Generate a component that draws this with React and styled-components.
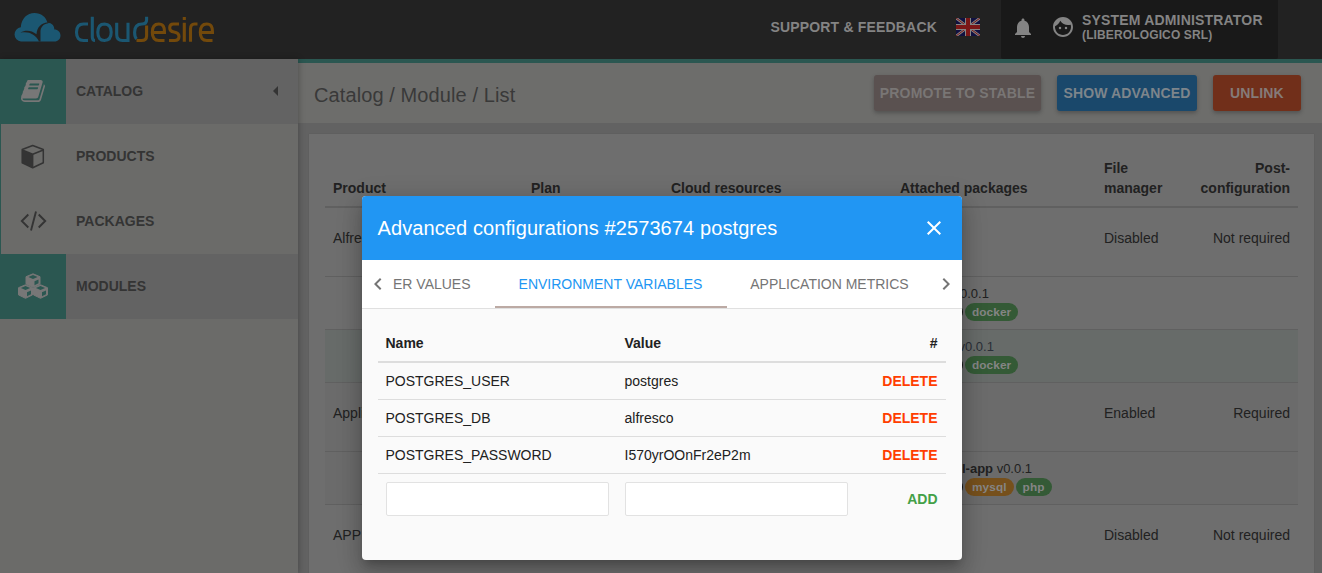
import React from "react";
import styled, { createGlobalStyle, css } from "styled-components";
import { MdNotifications, MdFace, MdChevronLeft, MdChevronRight, MdClose, MdArrowLeft } from "react-icons/md";

const Global = createGlobalStyle`
  * { box-sizing: border-box; }
  body { margin: 0; overflow: hidden; background: #626262; color: #212121;
    font-family: "Liberation Sans", Arial, sans-serif; font-size: 14px; line-height: 20px; }
`;
const Page = styled.div`height: 573px; display: flex; flex-direction: column; overflow: hidden;`;
const Header = styled.header`
  height: 59px; flex: none; display: flex; background: #222222; color: #848484; font-weight: bold;
`;
const Brand = styled.div`
  display: flex; padding: 12px 0 0 13px; flex: 1; gap: 12px;
`;
const Support = styled.div`font-size: 14px; padding: 17px 19px 0 0; letter-spacing: .18px;`;
const Flag = styled.svg`display: block; width: 24px; height: 18px; margin: 18px 21px 0 0;`;
const UserZone = styled.div`
  width: 277px; margin-right: 44px; background: #191919; border-radius: 0 0 2px 2px; display: flex; padding: 0 0 0 10px;
`;
const Bell = styled(MdNotifications)`width: 24px; height: 24px; margin-top: 16px; flex: none;`;
const Face = styled(MdFace)`width: 24px; height: 24px; margin: 15px 7px 0 16px; flex: none;`;
const UserText = styled.div`padding-top: 12px; line-height: 16px; letter-spacing: .18px; white-space: nowrap;`;
const Company = styled.div`font-size: 12px; line-height: 14px; letter-spacing: .13px;`;

const Body = styled.div`flex: 1; display: flex; min-height: 0;`;
const Sidebar = styled.nav`
  width: 298px; flex: none; background: #6b6b69; box-shadow: 1px 0 6px rgba(0,0,0,.25); z-index: 1; position: relative;
`;
const NavItem = styled.div`
  height: 65px; display: flex; align-items: center; color: #343434; font-weight: bold; letter-spacing: 0;
  padding-right: 11px;
  ${p => p.$active ? css`background: #636363;` : css`border-left: 1px solid #2b5751;`}
`;
const NavIcon = styled.div`
  width: ${p => p.$active ? 66 : 65}px; height: 65px; margin-right: 10px; display: grid; place-items: center;
  background: ${p => p.$active ? "#2b5751" : "transparent"}; color: ${p => p.$active ? "#777" : "#343434"};
  padding: 0 ${p => p.$active ? 0 : 2}px 1px 0;
  svg { display: block; }
`;
const NavLabel = styled.span`flex: 1; padding-bottom: 2px;`;
const Caret = styled(MdArrowLeft)`width: 24px; height: 24px; margin: 0 -1px 2px 0;`;

const Main = styled.main`flex: 1; min-width: 0; border-top: 4px solid #2b5751;`;
const TitleBar = styled.div`
  height: 60px; background: #6d6d6b; display: flex; gap: 16px; padding: 12px 21px 0 16px;
`;
const Crumb = styled.h1`margin: 0; flex: 1; font-size: 20px; line-height: 40px; font-weight: normal; color: #393939; letter-spacing: .1px;`;
const Button = styled.button`
  height: 36px; width: ${p => p.$w}px; border: 0; border-radius: 3px; background: ${p => p.$bg}; color: ${p => p.$fg};
  font: bold 14px "Liberation Sans", sans-serif; letter-spacing: .15px; padding: 0; white-space: nowrap;
  box-shadow: 0 2px 4px rgba(0,0,0,.26);
`;
const Card = styled.section`
  margin: 11px 8px 0 11px; height: 460px; background: #6e6e6e; padding: 16px 16px 0; overflow: hidden; box-shadow: 0 0 1px rgba(0,0,0,.15);
`;
const Table = styled.div`display: flex; flex-direction: column;`;
const Row = styled.div`
  display: grid; grid-template-columns: 198px 140px 229px 204px 78px 1fr; padding: 0 8px; height: ${p => p.$h}px;
  border-bottom: 1px solid #606060; color: #212121; align-items: ${p => p.$top ? "start" : "center"};
  background: ${p => p.$bg || "transparent"};
  & > :last-child { text-align: right; }
`;
const HeadRow = styled(Row)`
  height: 58px; border-bottom: 2px solid #606060; font-weight: bold; align-items: end; padding-bottom: 8px;
`;
const RowCell = styled.div`padding-bottom: ${p => p.$lift || 0}px; white-space: ${p => p.$wrap ? "normal" : "nowrap"};`;
const Package = styled.div`padding-top: 9px; width: 204px; font-size: 13px; line-height: 16px; white-space: nowrap; color: ${p => p.$blue ? "#2a2f37" : "#212121"};`;
const PackageLine = styled.div`padding-left: ${p => p.$x}px;`;
const Tags = styled.div`display: flex; gap: 2px; padding: 1px 0 0;`;
const Tag = styled.span`
  height: 18px; border-radius: 9px; padding: 0 7px; font: bold 11.8px/18px "Liberation Sans", sans-serif;
  letter-spacing: .1px; color: #858585; background: ${p => p.$bg};
`;
const KindTag = styled(Tag)`width: 63px;`;

const Dialog = styled.div`
  position: absolute; z-index: 5; left: 362px; top: 196px; width: 600px; height: 364px; background: #fafafa;
  border-radius: 4px; overflow: hidden;
  box-shadow: 0 7px 8px -4px rgba(0,0,0,.2), 0 13px 19px 2px rgba(0,0,0,.14), 0 5px 24px 4px rgba(0,0,0,.12);
`;
const DialogHead = styled.div`
  height: 64px; background: #2196f3; color: #fff; display: flex; align-items: center; justify-content: space-between;
  padding: 0 16.5px 0 15.5px; font-size: 20px; letter-spacing: .1px;
`;
const Close = styled(MdClose)`width: 24px; height: 24px;`;
const Tabs = styled.div`
  height: 49px; display: flex; background: #fff; border-bottom: 1px solid #e0e0e0; color: #757575;
`;
const TabArrow = styled.div`
  width: ${p => p.$w}px; display: flex; align-items: center; justify-content: center; padding-right: ${p => p.$pull || 0}px;
  svg { width: 24px; height: 24px; flex: none; }
`;
const Tab = styled.div`
  width: ${p => p.$w}px; text-align: ${p => p.$left ? "left" : "center"}; line-height: 48px; height: 48px; white-space: nowrap;
  ${p => p.$on && css`color: #2196f3; border-bottom: 2px solid #bcaaa4; padding-right: 1px;`}
`;
const Vars = styled.div`margin: 16px 16px 0;`;
const VarRow = styled.div`
  height: ${p => p.$h || 37}px; display: grid; grid-template-columns: 239px 1fr 60px; align-items: center; padding: 0 8.5px 0 7.5px;
  border-bottom: ${p => p.$line ?? 1}px solid #ddd; font-weight: ${p => p.$bold ? "bold" : "normal"};
  & > :last-child { text-align: right; }
`;
const InputRow = styled(VarRow)`padding: 0 8.5px 0 8px;`;
const Action = styled.span`font-weight: bold; color: ${p => p.$c};`;
const Input = styled.input`width: 223px; height: 34px; border: 1px solid #e2e2e2; border-radius: 2px; background: #fff; padding: 0 8px;`;

const CloudMark = () => (
  <svg width="48" height="30" viewBox="0 0 48 30">
    <path fill="#1b5772" d="M8 29.500a7.200 7.200 0 0 1-.2-14.300C8.500 6.500 14 1 21.500 1c6.500 0 11.500 3.800 13 9.800 4.500 0 7 3.200 6.800 6.700 3.300-.1 6.200 2.500 6.200 6s-2.500 6-6 6z" />
    <path fill="#222222" d="M7.500 20.800c5-3 10.500-2.500 16 1.500.5-7 4.500-11.300 11.500-12 .8 0 1 .8.200 1-5 .7-7.800 4-7.700 9v9.200h-1.500c-3.500-7-10-10.500-18.500-8.700z" />
  </svg>
);
const WordMark = () => (
  <svg width="142" height="32" viewBox="0 0 142 32" fill="none" strokeWidth="3.100">
    <g stroke="#1b5772">
      <path d="M15 12H10.500Q3.500 12 3.500 20.300T10.500 28.500H15M19.300 4.700V25Q19.300 28.500 22 28.500M31.500 12Q24.800 12 24.800 20.300T31.500 28.500 38.200 20.300 31.500 12M43.700 10.700V22.500Q43.700 28.500 49.500 28.500H55V10.700" />
      <path d="M73.600 4.700V8Q73.600 12 69 12 61.600 12 61.600 20.300 61.600 25 63.500 27" />
    </g>
    <g stroke="#73490b">
      <path d="M63.500 28.500H68.500Q73.600 28.500 73.600 24V13.500M79.500 20.500H91.500Q92 12 85.700 12 79.300 12 79.300 20.300T86 28.500H91.500M106 12H100.500Q96.700 12 96.700 15.800 96.700 19.500 101 20 106 20.800 106 24.500 106 28.500 101.500 28.500H96M111.300 10.700V29.800M111.300 5V8M117.500 29.800V17Q117.500 12 121.500 12H124.500M127.500 20.500H139.500Q140 12 133.700 12 127.300 12 127.300 20.300T134 28.500H139.500" />
    </g>
  </svg>
);
const BookIcon = () => (
  <svg width="24" height="26" viewBox="0 0 1664 1792" fill="currentColor">
    <path d="M1639 478q40 57 18 129l-275 906q-19 64-76.500 107.500T1183 1664H260q-77 0-148.500-53.500T12 1479q-24-67-2-127 0-4 3-27t4-37q1-8-3-21.500t-3-19.500q2-11 8-21t16.500-23.500T52 1179q23-38 45-91.500t30-91.500q3-10 .5-30t-.5-28q3-11 17-28t17-23q21-36 42-92t25-90q1-9-2.500-32t.5-28q4-13 22-30.500t22-22.500q19-26 42.500-84.500T340 411q1-8-3-25.500t-2-26.500q2-8 9-18t18-23 17-21q8-12 16.500-30.500t15-35 16-36 19.500-32 26.500-23.500 36-11.500T553 134l-1 3q38-9 51-9h761q74 0 114 56t18 130l-274 906q-36 119-71.500 153.500T1022 1408H153q-27 0-38 15-11 16-1 43 24 70 144 70h923q29 0 56-15.500t35-41.500l300-987q7-22 5-57 38 15 59 43zm-1064 2q-4 13 2 22.500t20 9.500h608q13 0 25.500-9.500T1247 480l21-64q4-13-2-22.500t-20-9.500H638q-13 0-25.500 9.500T596 416zm-83 256q-4 13 2 22.500t20 9.500h608q13 0 25.500-9.500T1164 736l21-64q4-13-2-22.500t-20-9.500H555q-13 0-25.500 9.500T513 672z" />
  </svg>
);
const BoxIcon = () => (
  <svg width="24" height="25" viewBox="0 0 24 25">
    <path fill="none" stroke="currentColor" strokeWidth="1.500" strokeLinejoin="round" d="M11.700 1.500l10.600 4v13.200L11.700 23.700 1.200 18.700V5.500zM1.200 6L11.700 10.200 22.300 6" />
    <path fill="currentColor" d="M1 6l11.400 4.500v13.500L1 18.700z" />
  </svg>
);
const CodeIcon = () => (
  <svg width="28" height="22" viewBox="0 0 28 22" fill="none" stroke="currentColor" strokeWidth="1.900">
    <path d="M9.300 4.500L2.800 11l6.500 6.500M19.700 4.500L26.200 11l-6.500 6.500M17 1.500L12 20.500" />
  </svg>
);
const Cube = ({ x, y }) => (
  <g transform={`translate(${x} ${y})`}>
    <path fill="currentColor" stroke="currentColor" strokeLinejoin="round" d="M8 .8l7 2.900v7.200l-7 3.400-7-3.400V3.700z" />
    <path fill="#2b5751" d="M8 2l4.600 2L8 6 3.400 4zM9.500 8.200l4-1.800v3.800l-4 2.100z" />
  </g>
);
const CubesIcon = () => (
  <svg width="32" height="26" viewBox="0 0 32 26"><Cube x={8} y={0} /><Cube x={0.500} y={11} /><Cube x={15.500} y={11} /></svg>
);

const UnionFlag = () => (
  <Flag viewBox="0 0 24 18">
    <path fill="#101040" d="M0 0h24v18H0z" />
    <path stroke="#858585" strokeWidth="2.600" d="M0 0l24 18M24 0L0 18" />
    <path stroke="#7a1717" strokeWidth="1" d="M0 0l24 18M24 0L0 18" />
    <path stroke="#858585" strokeWidth="6" d="M12 0v18M0 9h24" />
    <path stroke="#7a1717" strokeWidth="4" d="M12 0v18M0 9h24" />
  </Flag>
);

const green = "#345a36";
const variables = [["POSTGRES_USER", "postgres"], ["POSTGRES_DB", "alfresco"], ["POSTGRES_PASSWORD", "I570yrOOnFr2eP2m"]];

const ProductRow = ({ h, name, manager, config, bg }) => (
  <Row $h={h} $bg={bg}>
    <RowCell $lift={9}>{name}</RowCell><i /><i /><i />
    <RowCell $lift={9}>{manager}</RowCell><RowCell $lift={9}>{config}</RowCell>
  </Row>
);
const PackageRow = ({ name, x = 0, tags, bg, blue }) => (
  <Row $h={53} $top $bg={bg}>
    <i /><i /><i />
    <Package $blue={blue}>
      <PackageLine $x={x}><b>{name}</b> v0.0.1</PackageLine>
      <Tags><KindTag $bg="#151515" />{tags.map(([t, c]) => <Tag key={t} $bg={c}>{t}</Tag>)}</Tags>
    </Package>
    <i /><i />
  </Row>
);

export default function App() {
  return (
    <Page>
      <Global />
      <Header>
        <Brand><CloudMark /><WordMark /></Brand>
        <Support>SUPPORT &amp; FEEDBACK</Support>
        <UnionFlag />
        <UserZone>
          <Bell /><Face />
          <UserText>SYSTEM ADMINISTRATOR<Company>(LIBEROLOGICO SRL)</Company></UserText>
        </UserZone>
      </Header>
      <Body>
        <Sidebar>
          <NavItem $active><NavIcon $active><BookIcon /></NavIcon><NavLabel>CATALOG</NavLabel><Caret /></NavItem>
          <NavItem><NavIcon><BoxIcon /></NavIcon><NavLabel>PRODUCTS</NavLabel></NavItem>
          <NavItem><NavIcon><CodeIcon /></NavIcon><NavLabel>PACKAGES</NavLabel></NavItem>
          <NavItem $active><NavIcon $active><CubesIcon /></NavIcon><NavLabel>MODULES</NavLabel></NavItem>
        </Sidebar>
        <Main>
          <TitleBar>
            <Crumb>Catalog / Module / List</Crumb>
            <Button $w={167} $bg="#5a5150" $fg="#797675">PROMOTE TO STABLE</Button>
            <Button $w={140} $bg="#1a486b" $fg="#7d858b">SHOW ADVANCED</Button>
            <Button $w={88} $bg="#712f1a" $fg="#857b78">UNLINK</Button>
          </TitleBar>
          <Card>
            <Table>
              <HeadRow>
                <RowCell>Product</RowCell><RowCell>Plan</RowCell><RowCell>Cloud resources</RowCell>
                <RowCell>Attached packages</RowCell><RowCell $wrap>File manager</RowCell><RowCell $wrap>Post-configuration</RowCell>
              </HeadRow>
              <ProductRow h={69} name="Alfresco" manager="Disabled" config="Not required" />
              <PackageRow name="alfresco" tags={[["docker", green]]} />
              <PackageRow name="postgres" tags={[["docker", green]]} bg="#676b69" blue />
              <ProductRow h={69} name="Application" manager="Enabled" config="Required" bg="#6b6b6b" />
              <PackageRow name="mysql-app" x={28} tags={[["mysql", "#76501c"], ["php", green]]} bg="#6b6b6b" />
              <ProductRow h={69} name="APP" manager="Disabled" config="Not required" />
            </Table>
          </Card>
        </Main>
      </Body>
      <Dialog role="dialog">
        <DialogHead><span>Advanced configurations #2573674 postgres</span><Close /></DialogHead>
        <Tabs>
          <TabArrow $w={31}><MdChevronLeft /></TabArrow>
          <Tab $w={102} $left>ER VALUES</Tab>
          <Tab $w={232} $on>ENVIRONMENT VARIABLES</Tab>
          <Tab $w={205}>APPLICATION METRICS</Tab>
          <TabArrow $w={30} $pull={2}><MdChevronRight /></TabArrow>
        </Tabs>
        <Vars>
          <VarRow $h={38} $line={2} $bold><span>Name</span><span>Value</span><span>#</span></VarRow>
          {variables.map(([name, value]) => (
            <VarRow key={name}><span>{name}</span><span>{value}</span><Action $c="#ff3d00">DELETE</Action></VarRow>
          ))}
          <InputRow $h={50} $line={0}><Input aria-label="Name" /><Input aria-label="Value" /><Action $c="#43a047">ADD</Action></InputRow>
        </Vars>
      </Dialog>
    </Page>
  );
}
